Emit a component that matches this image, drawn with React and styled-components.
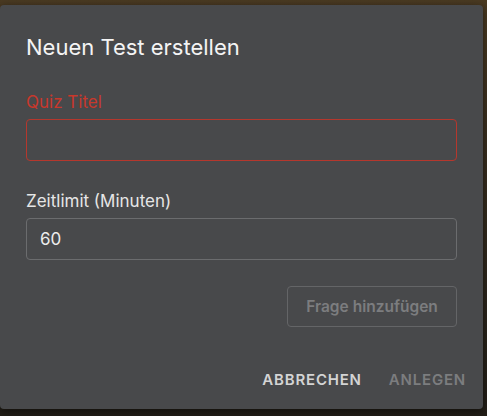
import React from 'react';
import styled, { createGlobalStyle } from 'styled-components';

const GlobalStyle = createGlobalStyle`
  html, body {
    margin: 0;
    padding: 0;
    width: 487px;
    height: 416px;
    overflow: hidden;
    font-family: Inter, 'Liberation Sans', Arial, sans-serif;
  }
`;

// background behind the modal (wood-ish desk)
const Backdrop = styled.div`
  width: 487px;
  height: 416px;
  background: linear-gradient(180deg, #4a3a22 0%, #3a2f1f 30%, #2c261c 70%, #221e17 100%);
  padding: 5px 4px 0 0;
  box-sizing: border-box;
`;

const Dialog = styled.div`
  width: 483px;
  height: 404px;
  box-sizing: border-box;
  background: #48494b;
  border-radius: 4px;
  box-shadow: 0 2px 8px rgba(0, 0, 0, 0.5);
  padding: 29px 26px 0 26px;
  display: flex;
  flex-direction: column;
`;

const Title = styled.h2`
  margin: 0;
  font-size: 22px;
  line-height: 26px;
  font-weight: 400;
  color: #f4f4f4;
`;

const Field = styled.div`
  display: flex;
  flex-direction: column;
  margin-top: ${(p) => p.$top}px;
`;

const Label = styled.label`
  font-size: 17px;
  line-height: 20px;
  color: ${(p) => (p.$error ? '#c8382c' : '#e6e6e6')};
  margin-bottom: 7px;
`;

const Input = styled.input`
  height: 42px;
  box-sizing: border-box;
  border: 1px solid ${(p) => (p.$error ? '#b5372d' : '#6b6c6e')};
  border-radius: 4px;
  background: transparent;
  color: #ececec;
  font-family: inherit;
  font-size: 17px;
  padding: 0 13px;
  outline: none;
`;

const AddRow = styled.div`
  display: flex;
  justify-content: flex-end;
  margin-top: 26px;
`;

const OutlineButton = styled.button`
  width: 170px;
  height: 41px;
  box-sizing: border-box;
  border: 1px solid #646567;
  border-radius: 4px;
  background: transparent;
  color: #7c7d7f;
  font-family: inherit;
  font-size: 15.5px;
  font-weight: 600;
`;

const Footer = styled.div`
  display: flex;
  justify-content: flex-end;
  align-items: center;
  gap: 27px;
  margin-top: 44px;
  margin-right: -9px;
`;

const TextButton = styled.button`
  border: none;
  background: transparent;
  padding: 0;
  font-family: inherit;
  font-size: 15px;
  line-height: 18px;
  font-weight: 600;
  letter-spacing: 0.8px;
  text-transform: uppercase;
  color: ${(p) => (p.$disabled ? '#7c7d7f' : '#d4d4d4')};
`;

export default function App() {
  return (
    <>
      <GlobalStyle />
      <Backdrop>
        <Dialog>
          <Title>Neuen Test erstellen</Title>
          <Field $top={32}>
            <Label $error>Quiz Titel</Label>
            <Input $error />
          </Field>
          <Field $top={30}>
            <Label>Zeitlimit (Minuten)</Label>
            <Input defaultValue="60" />
          </Field>
          <AddRow>
            <OutlineButton>Frage hinzufügen</OutlineButton>
          </AddRow>
          <Footer>
            <TextButton>Abbrechen</TextButton>
            <TextButton $disabled>Anlegen</TextButton>
          </Footer>
        </Dialog>
      </Backdrop>
    </>
  );
}
